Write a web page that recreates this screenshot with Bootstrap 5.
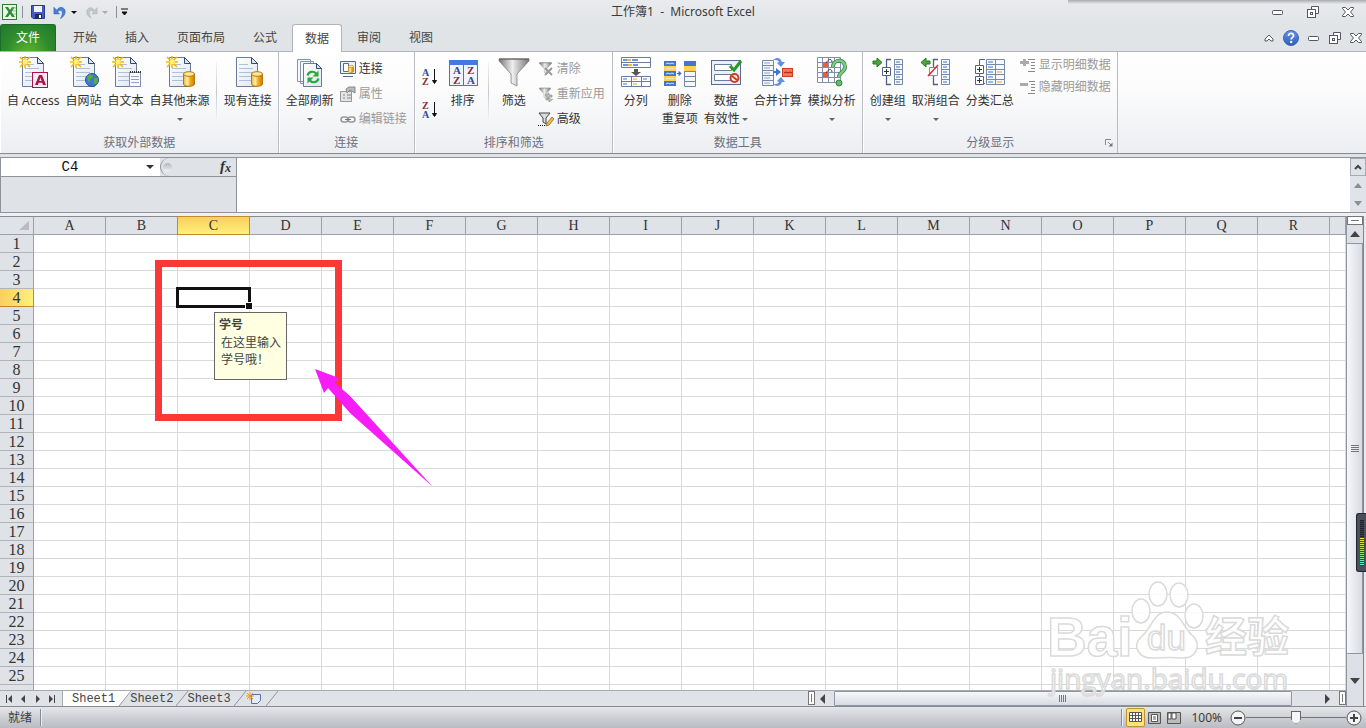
<!DOCTYPE html>
<html lang="zh-CN">
<head>
<meta charset="utf-8">
<meta name="viewport" content="width=device-width, initial-scale=1">
<title>工作簿1 - Microsoft Excel</title>
<link href="https://cdn.jsdelivr.net/npm/bootstrap@5.3.0/dist/css/bootstrap.min.css" rel="stylesheet">
<style>
body{font-family:"Noto Sans","Noto Sans CJK SC",sans-serif;font-size:12px;line-height:18px;color:#3b3b3b;background:#dfe2e7}
button{font:inherit;color:inherit;background:none;border:0;padding:0}
svg{display:block;flex:none}
.mono{font-family:"Liberation Mono","Noto Sans CJK SC",monospace}
.top-area{background:linear-gradient(#e9ebee,#e0e4e7 26px,#e1e4e7)}
.title-row{height:24px;padding-left:2px}
.title-row .win-tools{padding-right:12px;gap:23px}
.title-row .doc-name{padding-left:10px}
.qa-line{width:1px;height:12px;background:#8c9095}
.tab-row{height:28px;border-bottom:1px solid #b1b5ba}
.rib-tab{height:27px;padding:0 13px;margin:0 1px;color:#444;line-height:26px}
.rib-tab.current{background:#fff;height:28px;padding:0 12px;border:1px solid #b1b5ba;border-bottom:0;border-radius:3px 3px 0 0}
.file-tab{height:27px;width:56px;margin-right:3px;color:#fff;border:1px solid #1d6b2c;border-bottom:0;border-radius:3px 3px 0 0;background:radial-gradient(ellipse at 50% 110%,#5cb531,#2e8a2b 60%,#1f7a2d)}
.mdi-tools{padding-right:4px;gap:9px}
.window-shadow{top:0;right:0;width:298px;height:4px;background:linear-gradient(#a9abae,#e6e8eb)}
.ribbon{background:linear-gradient(#fff,#fbfbfc 40%,#eceef1);border-bottom:1px solid #878b91;height:102px}
.rib-group{border-right:1px solid #b9bdc3;box-shadow:inset 1px 0 #fff;padding:0 3px 0 4px}
.rib-body{height:82px}
.group-name{height:19px;color:#6b7180}
.big-btn{padding:4px 3px 0;line-height:18px;white-space:nowrap;color:#333}
.big-btn svg.ico{margin-bottom:4px}
.caret{display:inline-block;border:3px solid transparent;border-top-color:#666;border-bottom:0;vertical-align:middle}
.big-btn span>.caret{margin-left:2px}
.caret-row{height:18px;display:flex;align-items:center;justify-content:center}
.rib-sep{width:1px;height:60px;margin:10px 4px 0 3px;background:linear-gradient(#f4f5f7,#c5c9ce 50%,#f4f5f7)}
.rib-sep.wide{margin:10px 9px 0 6px}
.small-btn{height:25px;gap:3px;white-space:nowrap;color:#333}
.tight .small-btn{height:22px}
.small-btn:disabled{color:#9a9a9a}
.small-list{padding:4px 3px 0}
.small-list.tight{padding-top:2px}
.az-list{gap:15px;padding-left:3px}
.launcher{right:4px;bottom:6px}
.bar-gap{height:3px;background:#dfe2e7}
.formula-row{height:56px;border-top:1px solid #8f949b;border-bottom:1px solid #8f949b;background:#dfe2e7}
.name-area{width:237px;border-right:1px solid #8f949b;border-left:1px solid #8f949b}
.name-line{height:19px;border-bottom:1px solid #8f949b}
.name-box{width:138px;height:18px;border:0;background:#fff;text-align:center;font-size:14px;line-height:18px;padding:0;color:#111;outline:0}
.drop-btn{width:21px;height:18px;background:#fff}
.fx-area{border-radius:9px 0 0 9px;border-left:1px solid #8f949b;padding:0 4px 0 2px}
.knob{width:9px;height:9px;border-radius:50%;background:linear-gradient(#b5b9be,#f1f2f4)}
.formula-box{border:0;resize:none;outline:0;background:#fff;padding:2px}
.formula-side{width:16px;background:#e0e3e9}
.formula-side button{height:18px}
.formula-side button:first-child{border:1px solid #a6abb2}
.sheet-gap{height:3px;background:#eef0f4}
.sheet-zone{min-height:0}
.grid-zone{min-height:0;overflow:hidden;background:#fff}
.cells{table-layout:fixed;width:100%;border-collapse:separate;border-spacing:0;font-family:"Liberation Serif","Noto Sans CJK SC",serif;font-size:14px;line-height:16px}
.cells th,.cells td{padding:0;overflow:hidden;font-weight:400;text-align:center;color:#333;white-space:nowrap}
.cells thead th{height:19px;background:#dfe2e7;border-top:1px solid #878b91;border-bottom:1px solid #9ba1a8;border-right:1px solid #9ba1a8;padding-top:1px}
.cells tbody th{height:18px;background:#dfe2e7;border-right:1px solid #9ba1a8;border-bottom:1px solid #b1b5ba;padding-top:1px;font-size:16px}
.cells td{border-right:1px solid #d9dadb;border-bottom:1px solid #d9dadb}
.cells thead th.picked{background:linear-gradient(#fbcf5e,#fff07a);border-color:#c28a30;box-shadow:-1px 0 #c28a30}
.cells tbody th.picked{background:linear-gradient(90deg,#fbcf5e,#fff07a);border-color:#c28a30}
.col-num{width:34px}.col-std{width:72px}
.active-cell{left:176px;top:71px;width:75px;height:21px;border:3px solid #111}
.fill-dot{right:-4px;bottom:-4px;width:6px;height:6px;background:#111;outline:1px solid #fff}
.input-tip{left:214px;top:96px;width:73px;height:68px;background:#ffffe1;border:1px solid #666;padding:3px 0 0 4px;line-height:18px;color:#444}
.input-tip p{padding-left:2px;line-height:17px}
.red-frame{left:155px;top:44px;width:187px;height:161px;border:7px solid #fb3838}
.arrow-mark{left:315px;top:153px}
.water-mark{right:52px;bottom:7px;pointer-events:none}
.bottom-row{height:16px;border-top:1px solid #a6abb2;background:#dfe2e7}
.nav-arrows{width:63px;border-right:1px solid #a6abb2;padding-left:5px;gap:5px;height:15px}
.sheet-tab{height:15px;line-height:16px;color:#444;margin-left:-2px}
.sheet-tab.current{background:#fff;padding-left:9px;margin-left:0}
.sheet-tab.current span{padding-right:1px}
.hscroll{width:40%}
.bar-thumb{background:linear-gradient(#f6f7f9,#d7dbe2);border:1px solid #8f96a3;border-radius:1px}
.split-grip{width:7px;height:14px;flex:none;border:1px solid #777;background:#fff;padding:2px}
.split-grip i{display:block;width:2px;height:8px;border-left:1px solid #777}
.vscroll{flex:none;width:17px;background:#dde0e6;border-left:1px solid #8f96a3}
.vscroll button{padding:2px 0}
.vscroll .down-btn{margin-bottom:20px}
.vscroll .bar-thumb{background:linear-gradient(90deg,#f6f7f9,#d7dbe2);flex:19 1 0;border-left:0}
.vsplit{height:9px;border:1px solid #777;background:#fff;padding:3px 3px 0}
.vsplit i{display:block;border-top:1px solid #777}
.edge-strip{flex:none;width:3px;background:#e9e8ee;border-left:1px solid #7f8694}
.meter{right:0;top:297px;width:10px;height:59px;background:#4a4f5c;border:1px solid #22252d;border-right:0;border-radius:3px 0 0 3px;padding:6px 0 0 3px}
.meter i{display:block;width:4px;height:46px;background:repeating-linear-gradient(transparent 0 1px,#3c414d 1px 2px),linear-gradient(#20232a 18px,#ffe23c 18px,#a6ec5e 30px,#3ff0d0 46px)}
.status{height:22px;flex:none;border-top:1px solid #878b91;background:linear-gradient(#e4e6e9,#c9ccd1 60%,#b9bcc2)}
.status-line{width:1px;height:17px;background:#888d95;box-shadow:1px 0 #eceef0}
.view-btn{width:19px;height:19px;border-radius:2px}
.view-btn.current{background:#ffe27d;border:1px solid #c2912e}
.zoom-range{appearance:none;width:100px;height:16px;margin:0;background:linear-gradient(#70757d,#70757d) center/100% 1px no-repeat}
.zoom-range::-webkit-slider-thumb{appearance:none;width:10px;height:13px;clip-path:polygon(0 0,100% 0,100% 65%,50% 100%,0 65%);background:#f6f7f8;border:1px solid #62676f}
.top-area,.ribbon,.bar-gap,.formula-row,.sheet-gap,.bottom-row{flex:none}
</style>
</head>
<body class="vh-100 d-flex flex-column overflow-hidden m-0">

<svg class="position-absolute" width="0" height="0" aria-hidden="true">
  <defs>
    <linearGradient id="gp" x1="0" y1="0" x2="1" y2="1"><stop offset="0" stop-color="#fff"/><stop offset="1" stop-color="#dde6f4"/></linearGradient>
    <linearGradient id="gy"><stop offset="0" stop-color="#f3b52c"/><stop offset=".35" stop-color="#fff0b0"/><stop offset=".6" stop-color="#f3ac1e"/><stop offset="1" stop-color="#c97c08"/></linearGradient>
    <linearGradient id="gf"><stop offset="0" stop-color="#777"/><stop offset=".45" stop-color="#eee"/><stop offset="1" stop-color="#777"/></linearGradient>
    <linearGradient id="gb" x1="0" y1="0" x2="0" y2="1"><stop offset="0" stop-color="#6695ea"/><stop offset="1" stop-color="#2e5cb8"/></linearGradient>
  </defs>
  <symbol id="page" viewBox="0 0 32 32"><path d="M5.500 1.500h15l6 6v23h-21z" fill="url(#gp)" stroke="#6b7c99"/><path d="M20.500 1.500v6h6z" fill="#dce5f3" stroke="#334a70"/><path d="M8 8.500h9M8 12.500h14M8 16.500h14M8 20.500h14M8 24.500h14" stroke="#afbfd8"/></symbol>
  <symbol id="spark" viewBox="0 0 12 12"><path d="M6 0v12M0 6h12M1 1l10 10M11 1L1 11" stroke="#eeb800" stroke-width="1.500"/><circle cx="6" cy="6" r="2.500" fill="#fff27a"/></symbol>
  <symbol id="drum" viewBox="0 0 12 16"><path d="M.5 3v10c0 3 11 3 11 0V3z" fill="url(#gy)" stroke="#b9770e"/><ellipse cx="6" cy="3" rx="5.500" ry="2.300" fill="#ffe79a" stroke="#b9770e"/></symbol>
  <symbol id="win-min" viewBox="0 0 12 12"><rect x=".5" y="4.500" width="10" height="4" rx="1" fill="#fff" stroke="#535666"/></symbol>
  <symbol id="win-rest" viewBox="0 0 12 12"><path d="M4.500.5h7v7h-3M4.500.5v3" fill="#fff" stroke="#535666"/><rect x=".5" y="3.500" width="8" height="8" fill="#fff" stroke="#535666"/><rect x="3.500" y="6.500" width="2" height="2" fill="none" stroke="#535666"/></symbol>
  <symbol id="win-x" viewBox="0 0 12 12"><path d="M.5 1.500h3L6 4l2.500-2.500h3v1L8.500 6l3 3.500v1h-3L6 8l-2.500 2.500h-3v-1L3.500 6l-3-3.500z" fill="#fff" stroke="#535666"/></symbol>
  <symbol id="funnel" viewBox="0 0 32 32"><path d="M1 3h30v2L19 18v12l-6-3v-9L1 5z" fill="url(#gf)" stroke="#777" stroke-width=".7"/><path d="M1 3h30" stroke="#555"/></symbol>
  <symbol id="rows-strip" viewBox="0 0 12 26"><path d="M.5.5h11v25H.5zM0 5.500h12M0 10.500h12M0 15.500h12M0 20.500h12" fill="#f4f7fc" stroke="#7485a3"/></symbol>
  <symbol id="bracket" viewBox="0 0 32 32"><path d="M17 3.500h-4.500v25H17" fill="none" stroke="#52627e" stroke-width="1.300"/><path d="M20.500 3.500h8v25h-8zM20 8.500h9M20 13.500h9M20 18.500h9M20 23.500h9" fill="#f6f9ff" stroke="#7788a5"/><path d="M22 6h4M22 11h4M22 16h4M22 21h4M22 26h4" stroke="#3974e0"/></symbol>
</svg>

<header class="top-area position-relative">
  <div class="title-row d-flex align-items-center">
    <div class="d-flex align-items-center" style="flex:1 1 0">
      <svg width="16" height="16" viewBox="0 0 16 16"><rect x=".5" y=".5" width="14" height="15" fill="#e9f5e5" stroke="#2b7d35"/><path d="M3 3h3l2 3 2-3h3L9.500 8l3.500 5h-3L8 10l-2 3H3l3.500-5z" fill="#2b8a36"/><path d="M10 4h4M11 7h3M11 10h3" stroke="#8fc08f"/></svg>
      <i class="qa-line ms-1 me-2"></i>
      <button aria-label="保存" class="me-2"><svg width="14" height="14" viewBox="0 0 14 14"><path d="M.5.500h13v13H2l-1.500-1.500z" fill="#4659c4" stroke="#2b3b93"/><path d="M3 1h8v6H3z" fill="#eef2fb"/><path d="M4 9h7v5H4z" fill="#222b55"/><path d="M8 10h2v3H8z" fill="#fff"/></svg></button>
      <button aria-label="撤消"><svg width="14" height="15" viewBox="0 0 15 15"><path d="M1 2v7h6L5 7c3-4 7-1 4 5l-1 2c6-3 7-11 1-12-3 0-4 2-5 3z" fill="#4b7fd6" stroke="#285bab" stroke-width=".6"/></svg></button>
      <span class="caret ms-1 me-2" style="border-top-color:#111"></span>
      <button aria-label="恢复" disabled><svg width="13" height="15" viewBox="0 0 15 15"><path d="M14 2v7H8l2-2C7 3 3 6 6 12l1 2C1 11 0 3 6 2c3 0 4 2 5 3z" fill="#c3c6ca" stroke="#aaaeb3" stroke-width=".6"/></svg></button>
      <span class="caret mx-1" style="border-top-color:#aaa"></span>
      <i class="qa-line mx-1"></i>
      <button aria-label="自定义快速访问工具栏"><svg width="8" height="8" viewBox="0 0 8 8"><path d="M0 1h7M1 4h5L3.500 7z" stroke="#111" fill="#111" stroke-width="1"/></svg></button>
    </div>
    <div class="doc-name">工作簿1&nbsp; -&nbsp; Microsoft Excel</div>
    <div class="win-tools d-flex justify-content-end" style="flex:1 1 0">
      <button aria-label="最小化"><svg width="12" height="12"><use href="#win-min"/></svg></button>
      <button aria-label="还原"><svg width="12" height="12"><use href="#win-rest"/></svg></button>
      <button aria-label="关闭"><svg width="12" height="12"><use href="#win-x"/></svg></button>
    </div>
  </div>
  <div class="window-shadow position-absolute"></div>
  <nav class="tab-row d-flex">
    <button class="file-tab">文件</button>
    <button class="rib-tab">开始</button><button class="rib-tab">插入</button><button class="rib-tab">页面布局</button><button class="rib-tab">公式</button><button class="rib-tab current">数据</button><button class="rib-tab">审阅</button><button class="rib-tab">视图</button>
    <div class="mdi-tools ms-auto d-flex align-items-center">
      <button aria-label="折叠功能区"><svg width="10" height="10" viewBox="0 0 10 10"><path d="M1 6l4-4 4 4v2H7L5 6 3 8H1z" fill="#fff" stroke="#535666"/></svg></button>
      <button aria-label="帮助"><svg width="16" height="16" viewBox="0 0 16 16"><circle cx="8" cy="8" r="7.500" fill="url(#gb)" stroke="#3b65ae"/><path d="M5.500 6c0-4 5.500-3 5 0-.3 1.500-2.300 1.500-2.300 3.500" fill="none" stroke="#fff" stroke-width="1.800"/><circle cx="8.200" cy="12" r="1.200" fill="#fff"/></svg></button>
      <button aria-label="最小化窗口"><svg width="12" height="12"><use href="#win-min"/></svg></button>
      <button aria-label="还原窗口"><svg width="12" height="12"><use href="#win-rest"/></svg></button>
      <button aria-label="关闭窗口"><svg width="12" height="12"><use href="#win-x"/></svg></button>
    </div>
  </nav>
</header>

<section class="ribbon d-flex">
  <div class="rib-group">
    <div class="rib-body d-flex align-items-start">
      <button class="big-btn d-flex flex-column align-items-center"><svg class="ico" width="32" height="32"><use href="#page"/><use href="#spark" x="2" width="12" height="12"/><rect x="15.500" y="16.500" width="15" height="15" fill="#fbe9f0" stroke="#a8124d"/><path d="M18 29l4-10h3l4 10h-3l-.8-2.300h-3.600L21 29zM22.300 25h2.300l-1.100-3.400z" fill="#a8124d"/></svg>自 Access</button>
      <button class="big-btn d-flex flex-column align-items-center"><svg class="ico" width="32" height="32"><use href="#page"/><use href="#spark" x="2" width="12" height="12"/><circle cx="24" cy="24" r="6.500" fill="#3b78d8" stroke="#23509c"/><path d="M19 21c2-4 6-3 6-1s-3 2-3 5-3-1-3-4zM26 22l4 0c0 4-2 7-4 6z" fill="#58ad3c"/></svg>自网站</button>
      <button class="big-btn d-flex flex-column align-items-center"><svg class="ico" width="32" height="32"><use href="#page"/><use href="#spark" x="2" width="12" height="12"/><rect x="19.500" y="16.500" width="11" height="14" fill="#f8faff" stroke="#8190aa"/><path d="M20 16h11" stroke="#333" stroke-width="2" stroke-dasharray="1 1"/><path d="M21 20.500h8M21 23.500h8M21 26.500h8" stroke="#8da3c6"/></svg>自文本</button>
      <button class="big-btn d-flex flex-column align-items-center"><svg class="ico" width="32" height="32"><use href="#page"/><use href="#spark" x="2" width="12" height="12"/><use href="#drum" x="19" y="15" width="12" height="16"/></svg>自其他来源<span class="caret-row"><i class="caret m-0"></i></span></button>
      <i class="rib-sep"></i>
      <button class="big-btn d-flex flex-column align-items-center"><svg class="ico" width="32" height="32"><use href="#page" x="-1"/><use href="#drum" x="19" y="15" width="12" height="16"/></svg>现有连接</button>
    </div>
    <div class="group-name text-center">获取外部数据</div>
  </div>

  <div class="rib-group pe-1">
    <div class="rib-body d-flex align-items-start">
      <button class="big-btn d-flex flex-column align-items-center"><svg class="ico" width="32" height="32"><path d="M3.500 3.500h13v22h-13zM6.500 5.500h13v22h-13z" fill="#f5f8fd" stroke="#8492aa"/><path d="M9.500 7.500h13l5 5v18h-18z" fill="url(#gp)" stroke="#6b7c99"/><path d="M22.500 7.500v5h5z" fill="#dce5f3" stroke="#334a70"/><path d="M13.500 19.500c1-4 6-5 8.500-2M24.500 22.500c-1 4-6 5-8.500 2" fill="none" stroke="#2fa83a" stroke-width="2.200"/><path d="M24.500 14.500v6h-6zM13.500 27.500v-6h6z" fill="#2fa83a"/></svg>全部刷新<span class="caret-row"><i class="caret m-0"></i></span></button>
      <div class="small-list">
        <button class="small-btn d-flex align-items-center"><svg width="16" height="16"><path d="M.5.500h15v12H.5zM3 15.500h10" fill="#eaf0fa" stroke="#536a90"/><path d="M3.500 2.500h5v8h-5z" fill="#fff" stroke="#667"/><use href="#drum" x="8" y="4" width="6" height="8"/></svg>连接</button>
        <button class="small-btn d-flex align-items-center" disabled><svg width="16" height="16"><path d="M.5 5.500h11v10H.5z" fill="#e4e4e4" stroke="#999"/><path d="M3 9h2M7 9h4M3 12h2M7 12h4" stroke="#888"/><path d="M6 3l3-2h6v6l-5-3-3 3z" fill="#bbb" stroke="#888"/></svg>属性</button>
        <button class="small-btn d-flex align-items-center" disabled><svg width="16" height="16"><rect x="1" y="6" width="7" height="5" rx="2.500" fill="none" stroke="#999" stroke-width="1.500"/><rect x="8" y="6" width="7" height="5" rx="2.500" fill="none" stroke="#999" stroke-width="1.500"/><path d="M5 8.500h6" stroke="#777"/></svg>编辑链接</button>
      </div>
    </div>
    <div class="group-name text-center">连接</div>
  </div>

  <div class="rib-group">
    <div class="rib-body d-flex align-items-start">
      <div class="az-list d-flex flex-column pt-3 me-1">
        <button aria-label="升序"><svg width="18" height="18" font-family="Liberation Serif" font-weight="700" font-size="10"><text x="0" y="8" fill="#2c4d94">A</text><text x="0" y="17" fill="#8d2632">Z</text><path d="M12.500 1v14M10.500 12.500l2 3 2-3z" stroke="#111" fill="#111"/></svg></button>
        <button aria-label="降序"><svg width="18" height="18" font-family="Liberation Serif" font-weight="700" font-size="10"><text x="0" y="8" fill="#8d2632">Z</text><text x="0" y="17" fill="#2c4d94">A</text><path d="M12.500 1v14M10.500 12.500l2 3 2-3z" stroke="#111" fill="#111"/></svg></button>
      </div>
      <button class="big-btn d-flex flex-column align-items-center"><svg class="ico" width="32" height="32" font-family="Liberation Serif" font-weight="700" font-size="11"><rect x="2.500" y="4.500" width="28" height="25" fill="#f0f5fd" stroke="#5573a5"/><path d="M2 4h29v5H2z" fill="#4479e2"/><path d="M16.500 9v20" stroke="#5573a5"/><text x="6" y="18" fill="#2c4d94">A</text><text x="6" y="28" fill="#8d2632">Z</text><text x="20" y="18" fill="#8d2632">Z</text><text x="20" y="28" fill="#2c4d94">A</text></svg>排序</button>
      <i class="rib-sep wide"></i>
      <button class="big-btn d-flex flex-column align-items-center px-0"><svg class="ico" width="32" height="32"><use href="#funnel"/></svg>筛选</button>
      <div class="small-list ms-2 pe-1 ps-0">
        <button class="small-btn d-flex align-items-center" disabled><svg width="16" height="16"><use href="#funnel" x="1" width="13" height="14"/><path d="M7 7l7 7M14 7l-7 7" stroke="#999" stroke-width="2"/></svg>清除</button>
        <button class="small-btn d-flex align-items-center" disabled><svg width="16" height="16"><use href="#funnel" x="1" width="12" height="14"/><path d="M7 9l4-2v2h3v2h-3v2zM15 13l-4 3v-2H8v-2h3" fill="#bbb" stroke="#888" stroke-width=".6"/></svg>重新应用</button>
        <button class="small-btn d-flex align-items-center"><svg width="16" height="16"><path d="M1 2h11L8 7v6l-3-2V7z" fill="#ddd" stroke="#444"/><path d="M0 14.500h8" stroke="#111" stroke-dasharray="1 1"/><path d="M8 15l1-3 5-6 2 2-5 6z" fill="#f0b950" stroke="#80591e" stroke-width=".7"/></svg>高级</button>
      </div>
    </div>
    <div class="group-name text-center">排序和筛选</div>
  </div>

  <div class="rib-group">
    <div class="rib-body d-flex align-items-start">
      <button class="big-btn d-flex flex-column align-items-center"><svg class="ico" width="32" height="32"><path d="M1.500 1.500h29v10h-29zM1 6.500h30" fill="#fff" stroke="#6b7c99"/><path d="M3 4h4M12 4h6M3 9h5M13 9h5" stroke="#3974e0" stroke-width="1.500"/><path d="M7 4h4M8 9h4" stroke="#f39b1c" stroke-width="1.500"/><path d="M14 13h4v3h3l-5 4-5-4h3z" fill="#555"/><path d="M1.500 20.500h29v10h-29zM1 25.500h30M11.500 20v11M21.500 20v11" fill="#fff" stroke="#6b7c99"/><path d="M3 23h4M23 23h4M3 28h4" stroke="#3974e0"/><path d="M13 23h4M13 28h4" stroke="#f39b1c"/></svg>分列</button>
      <button class="big-btn d-flex flex-column align-items-center ms-1"><svg class="ico" width="32" height="32"><path d="M0 5h12v25H0z" fill="#4972cd"/><path d="M0 10h12v5H0zM0 20h12v5H0z" fill="#ffd34a"/><path d="M2 8l2-1 2 1 2-1 2 1M2 13l2-1 2 1 2-1 2 1M2 18l2-1 2 1 2-1 2 1M2 23l2-1 2 1 2-1 2 1M2 28l2-1 2 1 2-1 2 1" fill="none" stroke="#dce7ff"/><use href="#rows-strip" x="20" y="5" width="12" height="26"/><path d="M20 5h12v5H20z" fill="#4972cd"/><path d="M20 10h12v5H20z" fill="#ffd34a"/><path d="M13 17.500h3M15 15.500l2 2-2 2z" fill="#3568c4" stroke="#3568c4"/></svg>删除<span>重复项</span></button>
      <button class="big-btn d-flex flex-column align-items-center"><svg class="ico" width="32" height="32"><rect x="1.500" y="4.500" width="29" height="24" fill="#eaf0f9" stroke="#5a6b89"/><path d="M4.500 8.500h17v6h-17zM4.500 18.500h17v6h-17z" fill="#fff" stroke="#6b7c99"/><path d="M20 10l4 4 7-9" fill="none" stroke="#279a25" stroke-width="3"/><circle cx="24.500" cy="22" r="4" fill="#fff" stroke="#cf3a1c" stroke-width="2"/><path d="M22 20l5 4" stroke="#cf3a1c" stroke-width="2"/></svg>数据<span>有效性<i class="caret"></i></span></button>
      <button class="big-btn d-flex flex-column align-items-center"><svg class="ico" width="32" height="32"><use href="#rows-strip" y="4" width="12" height="26"/><path d="M2 7h6M2 12h6M2 17h6M2 22h6M2 27h6" stroke="#8aa2cc"/><path d="M11 15h3v-3l5 4-5 4v-3h-3z" fill="#3974d8"/><path d="M11 4c5-4 8-1 9 2h3l-4 5-4-4 2-1c-1-2-3-2-6-2zM11 28c5 4 8 1 9-2h3l-4-5-4 4 2 1c-1 2-3 2-6 2z" fill="#5f91e2"/><rect x="20.500" y="12.500" width="10" height="8" fill="#ff7353" stroke="#c83f22"/><path d="M22 17l2-1 2 1 2-1 2 1" fill="none" stroke="#8a2412"/></svg>合并计算</button>
      <button class="big-btn d-flex flex-column align-items-center"><svg class="ico" width="32" height="32"><path d="M1.500 1.500h23v25h-23zM1 6.500h24M1 11.500h24M1 16.500h24M1 21.500h24M6.500 1v26M12.500 1v26M18.500 1v26" fill="#fff" stroke="#8090aa"/><path d="M7 6h5v5H7zM7 16h5v5H7z" fill="#f45a36"/><path d="M10 7c3-5 6-4 6-1M10 17c3-5 6-4 6-1" fill="none" stroke="#334"/><path d="M17 11c0-8 12-9 12 0 0 5-6 5-6 10" fill="none" stroke="#32853f" stroke-width="4"/><path d="M17 11c0-8 12-9 12 0 0 5-6 5-6 10" fill="none" stroke="#7fca87" stroke-width="2.500"/><circle cx="23" cy="27" r="3" fill="#68b871" stroke="#32853f"/></svg>模拟分析<span class="caret-row"><i class="caret m-0"></i></span></button>
    </div>
    <div class="group-name text-center">数据工具</div>
  </div>

  <div class="rib-group position-relative">
    <div class="rib-body d-flex align-items-start">
      <button class="big-btn d-flex flex-column align-items-center"><svg class="ico" width="32" height="32"><use href="#bracket" x="2"/><path d="M1 5h4V2l5 4.500L5 11V8H1z" fill="#48a83b" stroke="#26761f"/><path d="M10.500 11.500h8v8h-8z" fill="#fff" stroke="#52627e"/><path d="M12 15.500h5M14.500 13v5" stroke="#333"/></svg>创建组<span class="caret-row"><i class="caret m-0"></i></span></button>
      <button class="big-btn d-flex flex-column align-items-center"><svg class="ico" width="32" height="32"><use href="#bracket" x="1"/><path d="M10 5H6V2L1 6.500 6 11V8h4z" fill="#48a83b" stroke="#26761f"/><path d="M9.500 11.500h8v8h-8z" fill="#fff" stroke="#8390a6"/><path d="M8 20l10-11" stroke="#e02828" stroke-width="1.500"/></svg>取消组合<span class="caret-row"><i class="caret m-0"></i></span></button>
      <button class="big-btn d-flex flex-column align-items-center"><svg class="ico" width="32" height="32"><path d="M11 3.500H5.500v24H11" fill="none" stroke="#52627e"/><path d="M12.500 3.500h18v25h-18zM12 8.500h19M12 13.500h19M12 18.500h19M12 23.500h19M21.500 3v26" fill="#f6f9ff" stroke="#7788a5"/><path d="M14 6h5M14 11h5M14 16h5M14 21h5M14 26h5" stroke="#3974e0"/><path d="M23 16h5M23 26h5" stroke="#f39b1c"/><path d="M1.500 9.500h8v8h-8zM1.500 20.500h8v8h-8z" fill="#fff" stroke="#52627e"/><path d="M3 13.500h5M5.500 11v5M3 24.500h5M5.500 22v5" stroke="#333"/></svg>分类汇总</button>
      <div class="small-list tight">
        <button class="small-btn d-flex align-items-center" disabled><svg width="16" height="16"><path d="M3 2h3v2h3v3H6v2H3V7H0V4h3z" fill="#aaa"/><path d="M8 2.500h7M11 5.500h4M11 8.500h4M11 11.500h4M8 14.500h7" stroke="#888"/></svg>显示明细数据</button>
        <button class="small-btn d-flex align-items-center" disabled><svg width="16" height="16"><path d="M0 4h8v3H0z" fill="#aaa"/><path d="M9 2.500h6M11 5.500h4M11 8.500h4M11 11.500h4M8 14.500h7" stroke="#888"/></svg>隐藏明细数据</button>
      </div>
    </div>
    <div class="group-name text-center">分级显示</div>
    <button class="launcher position-absolute" aria-label="分级显示设置"><svg width="8" height="8"><path d="M.5 6V.5H6" fill="none" stroke="#888"/><path d="M3 3l3 3" stroke="#888"/><path d="M7.500 3.500v4h-4z" fill="#777"/></svg></button>
  </div>
</section>

<div class="bar-gap"></div>
<section class="formula-row d-flex">
  <div class="name-area">
    <div class="name-line d-flex">
      <input class="name-box mono" aria-label="名称框" value="C4">
      <button class="drop-btn" aria-label="名称列表"><svg class="m-auto" width="8" height="5"><path d="M0 0h8L4 4z" fill="#333"/></svg></button>
      <div class="fx-area flex-fill d-flex align-items-center justify-content-between"><span class="knob"></span><button aria-label="插入函数"><svg width="14" height="16" font-family="Liberation Serif" font-style="italic" font-weight="700"><text x="2" y="12" font-size="15" fill="#333">f</text><text x="7" y="13" font-size="12" fill="#333">x</text></svg></button></div>
    </div>
  </div>
  <textarea class="formula-box flex-fill" aria-label="编辑栏"></textarea>
  <div class="formula-side d-flex flex-column">
    <button aria-label="折叠编辑栏"><svg class="m-auto" width="8" height="6"><path d="M1 5l3-3 3 3" fill="none" stroke="#444" stroke-width="2"/></svg></button>
    <button aria-label="上一行"><svg class="m-auto" width="8" height="5"><path d="M0 5h8L4 0z" fill="#87918f"/></svg></button>
    <button aria-label="下一行"><svg class="m-auto" width="8" height="5"><path d="M0 0h8L4 5z" fill="#87918f"/></svg></button>
  </div>
</section>
<div class="sheet-gap"></div>

<main class="sheet-zone flex-fill d-flex position-relative">
  <div class="flex-fill d-flex flex-column overflow-hidden">
    <div class="grid-zone flex-fill position-relative">
      <table class="cells" aria-label="Sheet1">
        <colgroup id="cols"><col class="col-num"></colgroup>
        <thead><tr id="heads"><th aria-label="全选"><svg class="ms-auto me-1" width="10" height="10"><path d="M10 0v9H0z" fill="#b8bcc2"/></svg></th></tr></thead>
        <tbody id="rows"></tbody>
      </table>
      <div class="active-cell position-absolute"><i class="fill-dot position-absolute"></i></div>
      <div class="red-frame position-absolute"></div>
      <div class="input-tip position-absolute"><b>学号</b><p class="m-0">在这里输入<br>学号哦！</p></div>
      <svg class="arrow-mark position-absolute" width="119" height="120"><path d="M0 0l24 9-4 5 15 13 83 91L35 44 13 19l-4 5z" fill="#f61df6"/></svg>
    </div>
    <div class="bottom-row d-flex">
      <div class="nav-arrows d-flex align-items-center">
        <button aria-label="第一张"><svg width="9" height="8"><path d="M1.500 0v8" stroke="#444"/><path d="M7 0v8L3 4z" fill="#444"/></svg></button>
        <button aria-label="上一张"><svg width="9" height="8"><path d="M6 0v8L2 4z" fill="#444"/></svg></button>
        <button aria-label="下一张"><svg width="9" height="8"><path d="M3 0v8l4-4z" fill="#444"/></svg></button>
        <button aria-label="最后一张"><svg width="9" height="8"><path d="M2 0v8l4-4z" fill="#444"/><path d="M7.500 0v8" stroke="#444"/></svg></button>
      </div>
      <button class="sheet-tab current mono d-flex"><span>Sheet1</span><svg width="16" height="15"><path d="M3 15L16 0v15z" fill="#dfe2e7"/><path d="M3 15L15 0" stroke="#8f96a3"/></svg></button>
      <button class="sheet-tab mono d-flex"><span>Sheet2</span><svg width="16" height="15"><path d="M3 15L15 0" stroke="#8f96a3"/></svg></button>
      <button class="sheet-tab mono d-flex"><span>Sheet3</span><svg width="16" height="15"><path d="M3 15L15 0" stroke="#8f96a3"/></svg></button>
      <button class="sheet-tab d-flex" aria-label="插入工作表"><svg width="34" height="15"><path d="M6.500 3.500h9v6l-3 3h-6z" fill="#e4ecfb" stroke="#5673ae"/><path d="M5 1v8M1 5h8M2 2l6 6M8 2L2 8" stroke="#e79a1d"/><path d="M21 15L33 0" stroke="#8f96a3"/></svg></button>
      <div class="hscroll ms-auto d-flex align-items-stretch">
        <div class="split-grip"><i></i></div>
        <button class="ps-1 pe-2" aria-label="向左滚动"><svg width="7" height="10"><path d="M6 0v10L1 5z" fill="#444"/></svg></button>
        <div class="bar-thumb flex-fill d-flex align-items-center justify-content-center"><svg width="8" height="7"><path d="M.5 0v7M2.500 0v7M4.500 0v7M6.500 0v7" stroke="#777"/></svg></div>
        <button class="ps-4 pe-2" aria-label="向右滚动"><svg class="ms-2" width="7" height="10"><path d="M1 0v10l5-5z" fill="#444"/></svg></button>
        <div class="split-grip"><i></i></div>
      </div>
    </div>
  </div>
  <div class="vscroll d-flex flex-column">
    <div class="vsplit"><i></i></div>
    <button aria-label="向上滚动"><svg class="mx-auto my-1" width="10" height="6"><path d="M0 6h10L5 0z" fill="#444"/></svg></button>
    <div class="bar-thumb d-flex align-items-center justify-content-center"><svg width="8" height="8"><path d="M0 .5h8M0 2.500h8M0 4.500h8M0 6.500h8" stroke="#777"/></svg></div>
    <div style="flex:1 1 0"></div>
    <button class="down-btn" aria-label="向下滚动"><svg class="mx-auto" width="10" height="6"><path d="M0 0h10L5 6z" fill="#444"/></svg></button>
  </div>
  <div class="edge-strip"></div>
  <div class="meter position-absolute"><i></i></div>
  <svg class="water-mark position-absolute" width="270" height="124" fill="#fff" fill-opacity=".85" stroke="#dadada" stroke-width="1.500" aria-label="Baidu经验">
    <g transform="translate(6 1)">
      <ellipse cx="91" cy="35" rx="9" ry="12"/><ellipse cx="108" cy="18" rx="9" ry="12"/><ellipse cx="129" cy="19" rx="9" ry="12"/><ellipse cx="144" cy="40" rx="9" ry="12"/>
      <path d="M117 36c-14 0-16 18-26 25-10 10-1 21 10 21 8 0 22-1 30 0 15 1 21-12 12-22-10-8-12-24-26-24z"/>
      <g font-family="Liberation Sans"><text x="-3" y="80" font-size="55" font-weight="700">Bai</text><text x="97" y="74" font-size="35">du</text></g>
      <text x="155" y="76" font-family="Noto Sans CJK SC" font-size="42" font-weight="700">经验</text>
      <text x="0" y="113" font-family="Open Sans" font-size="28">jingyan.baidu.com</text>
    </g>
  </svg>
</main>

<footer class="status d-flex align-items-center">
  <span class="px-2">就绪</span><i class="status-line"></i>
  <i class="status-line ms-auto me-1"></i>
  <button class="view-btn current" aria-label="普通"><svg class="m-auto" width="13" height="11"><path d="M.5.500h12v9H.5zM0 3.500h13M0 6.500h13M3.500 0v10M6.500 0v10M9.500 0v10" fill="#fff" stroke="#555"/></svg></button>
  <button class="view-btn" aria-label="页面布局"><svg class="m-auto" width="13" height="12"><path d="M.5.500h12v11H.5z" fill="#bbb" stroke="#555"/><path d="M3.500 2.500h6v7h-6zM5 5h3M5 7h3" fill="#fff" stroke="#555"/></svg></button>
  <button class="view-btn" aria-label="分页预览"><svg class="m-auto" width="14" height="12"><path d="M.5.500h13v11H.5z" fill="#bbb" stroke="#555"/><path d="M1 1h3v6H1zM5 1h4v6H5z" fill="#fff" stroke="#555"/></svg></button>
  <span class="px-2">100%</span>
  <button aria-label="缩小"><svg width="16" height="16"><circle cx="8" cy="8" r="7" fill="#f2f3f5" stroke="#555"/><path d="M4 8h8" stroke="#444" stroke-width="2"/></svg></button>
  <input class="zoom-range" type="range" aria-label="显示比例" value="50">
  <button aria-label="放大" class="me-1"><svg width="16" height="16"><circle cx="8" cy="8" r="7" fill="#f2f3f5" stroke="#555"/><path d="M4 8h8M8 4v8" stroke="#444" stroke-width="2"/></svg></button>
</footer>

<script>
const letters = 'ABCDEFGHIJKLMNOPQR'.split('');
const cols = document.getElementById('cols'), heads = document.getElementById('heads');
letters.forEach(l => {
  cols.insertAdjacentHTML('beforeend', '<col class="col-std">');
  heads.insertAdjacentHTML('beforeend', `<th scope="col"${l === 'C' ? ' class="picked"' : ''}>${l}</th>`);
});
cols.insertAdjacentHTML('beforeend', '<col>');
heads.insertAdjacentHTML('beforeend', '<th></th>');
const fullRows = 25;
let html = '';
for (let r = 1; r <= fullRows + 1; r++) {
  html += `<tr><th scope="row"${r === 4 ? ' class="picked"' : ''}>${r > fullRows ? '' : r}</th>${'<td></td>'.repeat(letters.length + 1)}</tr>`;
}
document.getElementById('rows').innerHTML = html;
</script>
<script src="https://cdn.jsdelivr.net/npm/bootstrap@5.3.0/dist/js/bootstrap.bundle.min.js"></script>
</body>
</html>
